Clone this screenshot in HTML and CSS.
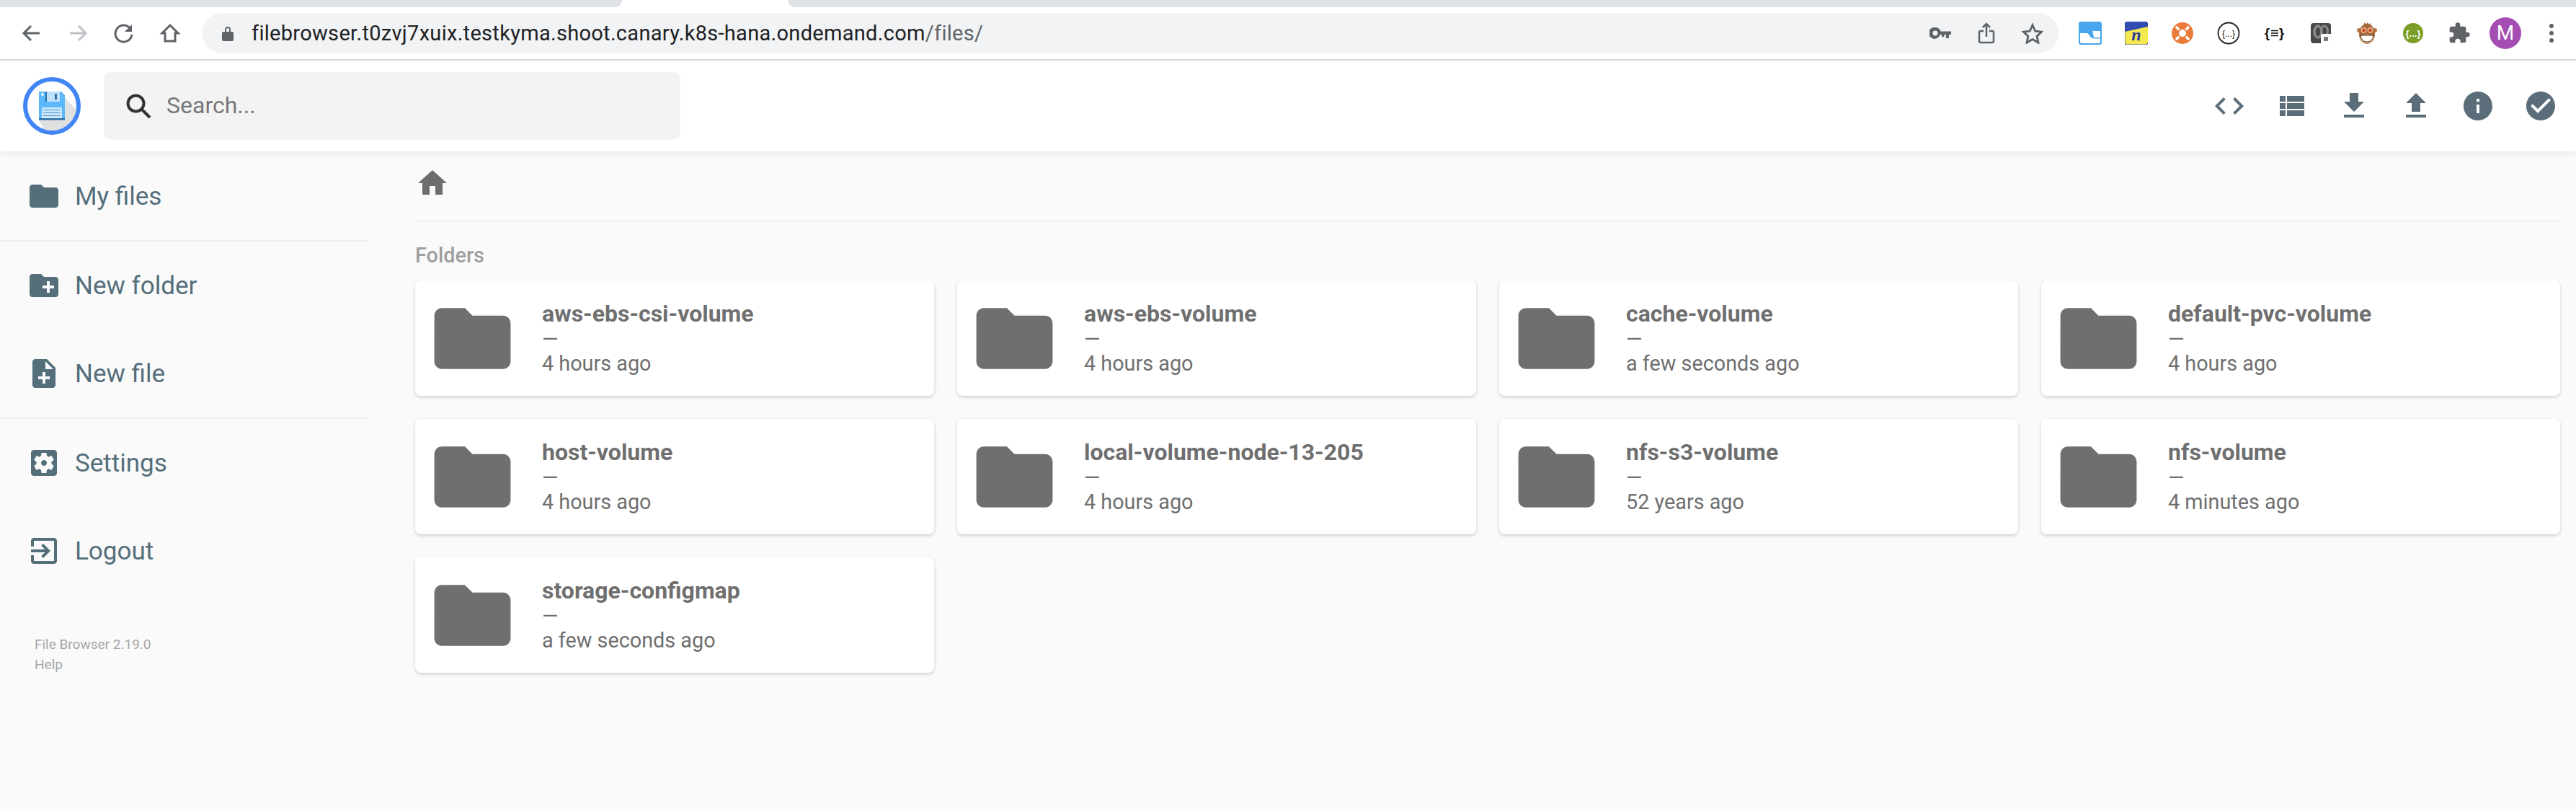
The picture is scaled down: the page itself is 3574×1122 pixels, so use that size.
FILE: index.html
```html
<!DOCTYPE html>
<html lang="en">
<head>
    <meta charset="UTF-8">
    <title>File Browser</title>
    <link rel="stylesheet" href="styles.css">
</head>
<body>
    <svg class="sprite" xmlns="http://www.w3.org/2000/svg">
        <symbol id="i-folder" viewBox="0 0 24 24"><path d="M10 4H4c-1.1 0-1.99.9-1.99 2L2 18c0 1.1.9 2 2 2h16c1.1 0 2-.9 2-2V8c0-1.1-.9-2-2-2h-8l-2-2z"/></symbol>
        <symbol id="i-newfolder" viewBox="0 0 24 24"><path d="M20 6h-8l-2-2H4c-1.11 0-1.99.89-1.99 2L2 18c0 1.11.89 2 2 2h16c1.11 0 2-.89 2-2V8c0-1.11-.89-2-2-2zm-1 8h-3v3h-2v-3h-3v-2h3V9h2v3h3v2z"/></symbol>
        <symbol id="i-newfile" viewBox="0 0 24 24"><path d="M14 2H6c-1.1 0-1.99.9-1.99 2L4 20c0 1.1.89 2 1.99 2H18c1.1 0 2-.9 2-2V8l-6-6zm2 14h-3v3h-2v-3H8v-2h3v-3h2v3h3v2zm-3-7V3.5L18.5 9H13z"/></symbol>
        <symbol id="i-settings" viewBox="0 0 24 24"><path d="M12 10c-1.1 0-2 .9-2 2s.9 2 2 2 2-.9 2-2-.9-2-2-2zm7-7H5c-1.11 0-2 .9-2 2v14c0 1.1.89 2 2 2h14c1.11 0 2-.9 2-2V5c0-1.1-.89-2-2-2zm-1.75 9c0 .23-.02.46-.05.68l1.48 1.16c.13.11.17.3.08.45l-1.4 2.42c-.09.15-.27.21-.43.15l-1.74-.7c-.36.28-.76.51-1.18.69l-.26 1.85c-.03.17-.18.3-.35.3h-2.8c-.17 0-.32-.13-.35-.29l-.26-1.85c-.43-.18-.82-.41-1.18-.69l-1.74.7c-.16.06-.34 0-.43-.15l-1.4-2.42c-.09-.15-.05-.34.08-.45l1.48-1.16c-.03-.23-.05-.46-.05-.69 0-.23.02-.46.05-.68l-1.48-1.16c-.13-.11-.17-.3-.08-.45l1.4-2.42c.09-.15.27-.21.43-.15l1.74.7c.36-.28.76-.51 1.18-.69l.26-1.85c.03-.17.18-.3.35-.3h2.8c.17 0 .32.13.35.29l.26 1.85c.43.18.82.41 1.18.69l1.74-.7c.16-.06.34 0 .43.15l1.4 2.42c.09.15.05.34-.08.45l-1.48 1.16c.03.23.05.46.05.69z"/></symbol>
        <symbol id="i-logout" viewBox="0 0 24 24"><path d="M10.09 15.59L11.5 17l5-5-5-5-1.41 1.41L12.67 11H3v2h9.67l-2.58 2.59zM19 3H5c-1.11 0-2 .9-2 2v4h2V5h14v14H5v-4H3v4c0 1.1.89 2 2 2h14c1.1 0 2-.9 2-2V5c0-1.1-.9-2-2-2z"/></symbol>
    </svg>

    <div class="tabstrip">
        <div class="tab-left"></div>
        <div class="tab-right"></div>
    </div>

    <div class="toolbar">
        <div class="tool"><svg class="ico-chrome" viewBox="0 0 32 32"><path d="M27 16H6M15 6L5 16l10 10"/></svg></div>
        <div class="tool tool-off"><svg class="ico-chrome" viewBox="0 0 32 32"><path d="M5 16h21M17 6l10 10-10 10"/></svg></div>
        <div class="tool"><svg class="ico-chrome" viewBox="0 0 32 32"><path d="M25 10a11.500 11.500 0 1 0 2 8"/><path class="fill" d="M27 4v10H17z"/></svg></div>
        <div class="tool"><svg class="ico-chrome" viewBox="0 0 32 32"><path d="M16 5L5 16h4v11h14V16h4z"/></svg></div>

        <div class="urlbar">
            <svg class="lock" viewBox="0 0 16 22"><path d="M4 9V6a4 4 0 0 1 8 0v3h2a2 2 0 0 1 2 2v9a2 2 0 0 1-2 2H2a2 2 0 0 1-2-2v-9a2 2 0 0 1 2-2zm2 0h4V6a2 2 0 0 0-4 0z"/></svg>
            <span class="url">filebrowser.t0zvj7xuix.testkyma.shoot.canary.k8s-hana.ondemand.com<span class="url-path">/files/</span></span>
            <div class="url-actions">
                <svg class="key" viewBox="0 0 30 16"><path fill-rule="evenodd" d="M8 0a8 8 0 0 1 7.600 5.500H30V10h-3v5h-4v-5h-2.500v3h-3.500v-3h-2.400A8 8 0 1 1 8 0zm0 4.500a3.500 3.500 0 1 0 0 7 3.500 3.500 0 0 0 0-7z"/></svg>
                <svg class="share" viewBox="0 0 24 30"><path d="M8 12H4a2 2 0 0 0-2 2v12a2 2 0 0 0 2 2h16a2 2 0 0 0 2-2V14a2 2 0 0 0-2-2h-4M12 20V2M7 7l5-5 5 5"/></svg>
                <svg class="star" viewBox="0 0 32 30"><path d="M16 3l4 9 9.500 1-7 6.500 2 9.500-8.500-5-8.500 5 2-9.500-7-6.500 9.500-1z"/></svg>
            </div>
        </div>

        <div class="extensions">
            <div class="ext"><svg class="ext-ico" viewBox="0 0 32 32"><rect width="32" height="32" rx="3" fill="#48a6ee"/><path d="M2 16h9c4 0 4 6 8 7 2 .5 11 .500 11 .500V28a2 2 0 0 1-2 2H4a2 2 0 0 1-2-2z" fill="#fff"/><path d="M19 13h11v9H22c-2-1-2-9-3-9z" fill="#fff"/></svg></div>
            <div class="ext"><svg class="ext-ico" viewBox="0 0 32 32"><rect width="32" height="32" rx="3" fill="#f5e94f"/><path d="M0 3a3 3 0 0 1 3-3h26a3 3 0 0 1 3 3v4L0 14z" fill="#2f4cae"/><path d="M0 3v26a3 3 0 0 0 3 3h26a3 3 0 0 0 3-3" fill="none" stroke="#2f4cae" stroke-width="1"/><text class="ext-n" x="16" y="26">n</text></svg></div>
            <div class="ext"><svg class="ext-ico" viewBox="0 0 32 32"><circle cx="16" cy="16" r="15" fill="#e97a38"/><circle cx="16" cy="16" r="5" fill="#fff"/><path d="M7 7l18 18M25 7L7 25" stroke="#fff" stroke-width="3.500" stroke-dasharray="6 13.500"/></svg></div>
            <div class="ext"><svg class="ext-ico" viewBox="0 0 32 32"><circle cx="16" cy="16" r="14.500" fill="#fff" stroke="#222" stroke-width="1.800"/><text class="ext-brace" x="16" y="20.500">{...}</text></svg></div>
            <div class="ext"><svg class="ext-ico" viewBox="0 0 32 32"><text class="ext-brace-b" x="9" y="22">{</text><text class="ext-brace-b" x="29" y="22">}</text><path d="M11 12.500h10M11 16h10M11 19.500h10" stroke="#111" stroke-width="1.400"/></svg></div>
            <div class="ext"><svg class="ext-ico ext-ico-sm" viewBox="0 0 28 28"><rect width="28" height="28" rx="4" fill="#484848"/><ellipse cx="10" cy="12" rx="5" ry="8" fill="none" stroke="#8a8a8a" stroke-width="3.500"/><ellipse cx="19" cy="11" rx="4.500" ry="7" fill="none" stroke="#8a8a8a" stroke-width="3"/><path d="M14 28V18a3 3 0 0 1 3-3h11v10a3 3 0 0 1-3 3z" fill="#fff"/><rect x="18" y="19" width="6" height="6" rx="1" fill="#777"/></svg></div>
            <div class="ext"><svg class="ext-ico ext-ico-sm" viewBox="0 0 28 30"><path d="M9 5l2-5 2 3 2-3 1 3 3-2-1 5z" fill="#8b4a22"/><circle cx="3" cy="11" r="3" fill="#b7794a"/><circle cx="25" cy="11" r="3" fill="#b7794a"/><ellipse cx="14" cy="16" rx="11" ry="14" fill="#a5673a"/><ellipse cx="9.500" cy="11" rx="4" ry="4" fill="#e0b48a"/><ellipse cx="18.500" cy="11" rx="4" ry="4" fill="#e0b48a"/><ellipse cx="14" cy="23" rx="10" ry="6.500" fill="#dfb184"/><circle cx="9.500" cy="11" r="2.200" fill="#d63a20"/><circle cx="18.500" cy="11" r="2.200" fill="#d63a20"/><path d="M5 18h18c-1 7-5 9-9 9s-8-2-9-9z" fill="#fff" stroke="#4a2a12"/></svg></div>
            <div class="ext"><svg class="ext-ico ext-ico-sm" viewBox="0 0 28 28"><circle cx="14" cy="14" r="14" fill="#7b9e27"/><text class="ext-brace-w" x="14" y="19">{...}</text></svg></div>
            <div class="ext"><svg class="ext-ico" viewBox="0 0 24 24"><path class="puzzle" d="M20.500 11H19V7c0-1.100-.9-2-2-2h-4V3.500a2.500 2.500 0 0 0-5 0V5H4c-1.100 0-1.990.9-1.990 2v3.800H3.500a2.700 2.700 0 0 1 0 5.400H2V20c0 1.100.9 2 2 2h3.800v-1.500a2.700 2.700 0 0 1 5.400 0V22H17c1.100 0 2-.9 2-2v-4h1.500a2.500 2.500 0 0 0 0-5z"/></svg></div>
            <div class="ext"><div class="avatar">M</div></div>
            <div class="ext"><div class="dots"><i></i><i></i><i></i></div></div>
        </div>
    </div>

    <header class="header">
        <svg class="logo" viewBox="0 0 80 80">
            <defs><clipPath id="logo-clip"><circle cx="40" cy="40" r="34"/></clipPath></defs>
            <circle cx="40" cy="40" r="37" fill="#fff" stroke="#4285f4" stroke-width="6"/>
            <path clip-path="url(#logo-clip)" d="M50 20l30 32v30H34L22 60z" fill="#e0e0e0"/>
            <path d="M22 20h31l5 5v34H22z" fill="#5cb8fb"/>
            <rect x="31" y="20" width="20" height="14" fill="#bfe1fb"/>
            <rect x="31" y="20" width="2" height="14" fill="#2a6fa5"/>
            <rect x="44" y="23" width="3" height="8" fill="#2a6fa5"/>
            <circle cx="27" cy="24" r="2" fill="#e3f3fe"/>
            <rect x="26" y="42" width="28" height="17" fill="#cdeafd"/>
            <path d="M28 45.500h24M28 49.500h24M28 53.500h24" stroke="#4a8dc0" stroke-width="1"/>
            <rect x="22" y="57" width="36" height="2.500" fill="#2a6fa5"/>
        </svg>
        <div class="search">
            <svg class="search-ico" viewBox="0 0 36 36"><circle cx="14.500" cy="14.500" r="11" fill="none" stroke="#333" stroke-width="4"/><path d="M22.500 22.500L34 34" stroke="#333" stroke-width="4"/></svg>
            <span class="search-text">Search...</span>
        </div>
        <div class="actions">
            <button class="action-btn"><svg viewBox="0 0 24 24"><path d="M9.400 16.600L4.800 12l4.600-4.600L8 6l-6 6 6 6 1.400-1.400zm5.200 0l4.600-4.600-4.600-4.600L16 6l6 6-6 6-1.400-1.400z"/></svg></button>
            <button class="action-btn"><svg viewBox="0 0 24 24"><path d="M4 14h4v-4H4v4zm0 5h4v-4H4v4zM4 9h4V5H4v4zm5 5h12v-4H9v4zm0 5h12v-4H9v4zM9 5v4h12V5H9z"/></svg></button>
            <button class="action-btn"><svg viewBox="0 0 24 24"><path d="M19 9h-4V3H9v6H5l7 7 7-7zM5 18v2h14v-2H5z"/></svg></button>
            <button class="action-btn"><svg viewBox="0 0 24 24"><path d="M9 16h6v-6h4l-7-7-7 7h4zm-4 2h14v2H5z"/></svg></button>
            <button class="action-btn"><svg viewBox="0 0 24 24"><path d="M12 2C6.480 2 2 6.480 2 12s4.480 10 10 10 10-4.480 10-10S17.520 2 12 2zm1 15h-2v-6h2v6zm0-8h-2V7h2v2z"/></svg></button>
            <button class="action-btn"><svg viewBox="0 0 24 24"><path d="M12 2C6.480 2 2 6.480 2 12s4.480 10 10 10 10-4.480 10-10S17.520 2 12 2zm-2 15l-5-5 1.410-1.410L10 14.170l7.590-7.590L19 8l-9 9z"/></svg></button>
        </div>
    </header>

    <div class="page">
        <nav class="sidebar">
            <div class="nav-group">
                <a class="nav-item"><svg><use href="#i-folder"/></svg><span>My files</span></a>
            </div>
            <div class="nav-group">
                <a class="nav-item"><svg><use href="#i-newfolder"/></svg><span>New folder</span></a>
                <a class="nav-item"><svg><use href="#i-newfile"/></svg><span>New file</span></a>
            </div>
            <div class="nav-group">
                <a class="nav-item"><svg><use href="#i-settings"/></svg><span>Settings</span></a>
                <a class="nav-item"><svg><use href="#i-logout"/></svg><span>Logout</span></a>
            </div>
            <p class="credits">File Browser 2.19.0<br>Help</p>
        </nav>

        <main class="content">
            <div class="breadcrumbs">
                <svg viewBox="0 0 24 24"><path d="M10 20v-6h4v6h5v-8h3L12 3 2 12h3v8z"/></svg>
            </div>
            <h2 class="section-title">Folders</h2>
            <div class="grid">
                <div class="card"><svg><use href="#i-folder"/></svg><div class="info"><p class="name">aws-ebs-csi-volume</p><p class="meta">—</p><p class="meta">4 hours ago</p></div></div>
                <div class="card"><svg><use href="#i-folder"/></svg><div class="info"><p class="name">aws-ebs-volume</p><p class="meta">—</p><p class="meta">4 hours ago</p></div></div>
                <div class="card"><svg><use href="#i-folder"/></svg><div class="info"><p class="name">cache-volume</p><p class="meta">—</p><p class="meta">a few seconds ago</p></div></div>
                <div class="card"><svg><use href="#i-folder"/></svg><div class="info"><p class="name">default-pvc-volume</p><p class="meta">—</p><p class="meta">4 hours ago</p></div></div>
                <div class="card"><svg><use href="#i-folder"/></svg><div class="info"><p class="name">host-volume</p><p class="meta">—</p><p class="meta">4 hours ago</p></div></div>
                <div class="card"><svg><use href="#i-folder"/></svg><div class="info"><p class="name">local-volume-node-13-205</p><p class="meta">—</p><p class="meta">4 hours ago</p></div></div>
                <div class="card"><svg><use href="#i-folder"/></svg><div class="info"><p class="name">nfs-s3-volume</p><p class="meta">—</p><p class="meta">52 years ago</p></div></div>
                <div class="card"><svg><use href="#i-folder"/></svg><div class="info"><p class="name">nfs-volume</p><p class="meta">—</p><p class="meta">4 minutes ago</p></div></div>
                <div class="card"><svg><use href="#i-folder"/></svg><div class="info"><p class="name">storage-configmap</p><p class="meta">—</p><p class="meta">a few seconds ago</p></div></div>
            </div>
        </main>
    </div>
</body>
</html>
```

FILE: styles.css
```css
body {
    margin: 0;
    height: 1122px;
    overflow: hidden;
    background: #fafafa;
    font-family: Roboto, "Liberation Sans", sans-serif;
}

p {
    margin: 0;
}

.sprite {
    display: none;
}

/* Browser chrome */
.tabstrip {
    display: flex;
    justify-content: space-between;
    height: 10px;
    background: #fff;
}

.tab-left,
.tab-right {
    background: #dee1e6;
}

.tab-left {
    width: 863px;
    border-bottom-right-radius: 12px;
}

.tab-right {
    width: 2481px;
    border-bottom-left-radius: 12px;
}

.toolbar {
    display: flex;
    align-items: center;
    height: 72px;
    padding-left: 12px;
    background: #fff;
    border-bottom: 2px solid #dcdcdc;
}

.tool {
    display: flex;
    align-items: center;
    justify-content: center;
    width: 64px;
    height: 56px;
}

.ico-chrome {
    width: 32px;
    height: 32px;
    fill: none;
    stroke: #5f6368;
    stroke-width: 3;
}

.ico-chrome .fill {
    fill: #5f6368;
    stroke: none;
}

.tool-off .ico-chrome {
    stroke: #bdc1c6;
}

.urlbar {
    display: flex;
    align-items: center;
    width: 2576px;
    height: 56px;
    margin-left: 12px;
    padding-left: 28px;
    box-sizing: border-box;
    background: #f1f3f4;
    border-radius: 28px;
}

.lock {
    width: 16px;
    height: 22px;
    fill: #5f6368;
}

.url {
    margin-left: 25px;
    font-size: 29px;
    letter-spacing: 0.3px;
    color: #202124;
    white-space: nowrap;
}

.url-path {
    color: #5f6368;
}

.url-actions {
    display: flex;
    align-items: center;
    gap: 37px;
    margin-left: auto;
    margin-right: 21px;
}

.key {
    width: 30px;
    height: 16px;
    fill: #5f6368;
}

.share {
    width: 24px;
    height: 30px;
    fill: none;
    stroke: #5f6368;
    stroke-width: 2.5;
}

.star {
    width: 30px;
    height: 30px;
    fill: none;
    stroke: #5f6368;
    stroke-width: 3;
}

.extensions {
    display: flex;
    margin-left: 12px;
}

.ext {
    display: flex;
    align-items: center;
    justify-content: center;
    width: 64px;
    height: 56px;
}

.ext-ico {
    width: 32px;
    height: 32px;
}

.ext-ico-sm {
    width: 28px;
    height: 30px;
}

.ext-n {
    font: italic bold 24px "Liberation Serif", serif;
    fill: #27389c;
    text-anchor: middle;
}

.ext-brace {
    font: 12px "Liberation Sans", sans-serif;
    fill: #111;
    text-anchor: middle;
}

.ext-brace-b {
    font: bold 18px "Liberation Sans", sans-serif;
    fill: #111;
    text-anchor: end;
}

.ext-brace-w {
    font: bold 13px "Liberation Sans", sans-serif;
    fill: #fff;
    text-anchor: middle;
}

.puzzle {
    fill: #5f6368;
}

.avatar {
    width: 44px;
    height: 44px;
    border-radius: 50%;
    background: #a44eb4;
    color: #fff;
    font-size: 28px;
    line-height: 44px;
    text-align: center;
}

.dots {
    display: flex;
    flex-direction: column;
    gap: 4px;
}

.dots i {
    width: 6px;
    height: 6px;
    border-radius: 50%;
    background: #5f6368;
}

/* App header */
.header {
    position: relative;
    display: flex;
    align-items: center;
    height: 126px;
    padding-left: 32px;
    background: #fff;
    box-shadow: 0 2px 10px rgba(0, 0, 0, 0.08);
}

.logo {
    width: 80px;
    height: 80px;
}

.search {
    display: flex;
    align-items: center;
    width: 800px;
    height: 94px;
    margin-left: 32px;
    background: #f3f3f3;
    border-radius: 10px;
    font-size: 32px;
    color: #777;
}

.search-ico {
    width: 36px;
    height: 36px;
    margin-left: 30px;
    margin-right: 21px;
}

.search-text {
    padding-bottom: 3px;
}

.actions {
    display: flex;
    margin-left: auto;
    margin-right: 6px;
}

.action-btn {
    width: 86.4px;
    height: 72px;
    padding: 0;
    border: 0;
    background: none;
}

.action-btn svg {
    display: block;
    width: 48px;
    height: 48px;
    margin: 0 auto;
    fill: #5a6d79;
}

/* Sidebar */
.page {
    display: flex;
}

.sidebar {
    flex: none;
    width: 512px;
    padding-top: 1px;
}

.nav-group {
    border-bottom: 2px solid #f0f0f0;
}

.nav-group:nth-child(3) {
    border-bottom: 0;
}

.nav-item {
    display: flex;
    align-items: center;
    height: 122px;
    padding-left: 37px;
    font-size: 35px;
    color: #546e7a;
}

.nav-item svg {
    width: 48px;
    height: 48px;
    margin-right: 19px;
    fill: #546e7a;
}

.credits {
    margin: 55px 0 0 48px;
    font-size: 19px;
    line-height: 28px;
    color: #a5a5a5;
}

/* Listing */
.content {
    flex: 1;
    padding: 0 22px 0 64px;
}

.breadcrumbs {
    height: 76px;
    padding-top: 20px;
    border-bottom: 2px solid #f0f0f0;
}

.breadcrumbs svg {
    display: block;
    width: 48px;
    height: 48px;
    fill: #6d6d6d;
}

.section-title {
    margin: 0;
    height: 81px;
    padding-top: 28px;
    box-sizing: border-box;
    font-size: 28.800px;
    font-weight: 500;
    line-height: 36px;
    color: #9e9e9e;
}

.grid {
    display: grid;
    grid-template-columns: repeat(4, 720px);
    gap: 32px;
}

.card {
    display: flex;
    align-items: center;
    height: 160px;
    padding-left: 16px;
    background: #fff;
    border-radius: 8px;
    box-shadow: 0 2px 6px rgba(0, 0, 0, 0.06), 0 2px 4px rgba(0, 0, 0, 0.12);
}

.card svg {
    flex: none;
    width: 127px;
    height: 127px;
    margin-right: 33px;
    fill: #6f6f6f;
}

.info {
    color: #6f6f6f;
}

.name {
    font-size: 32px;
    font-weight: 700;
    line-height: 36px;
}

.meta {
    font-size: 28.800px;
    line-height: 34px;
}
```
